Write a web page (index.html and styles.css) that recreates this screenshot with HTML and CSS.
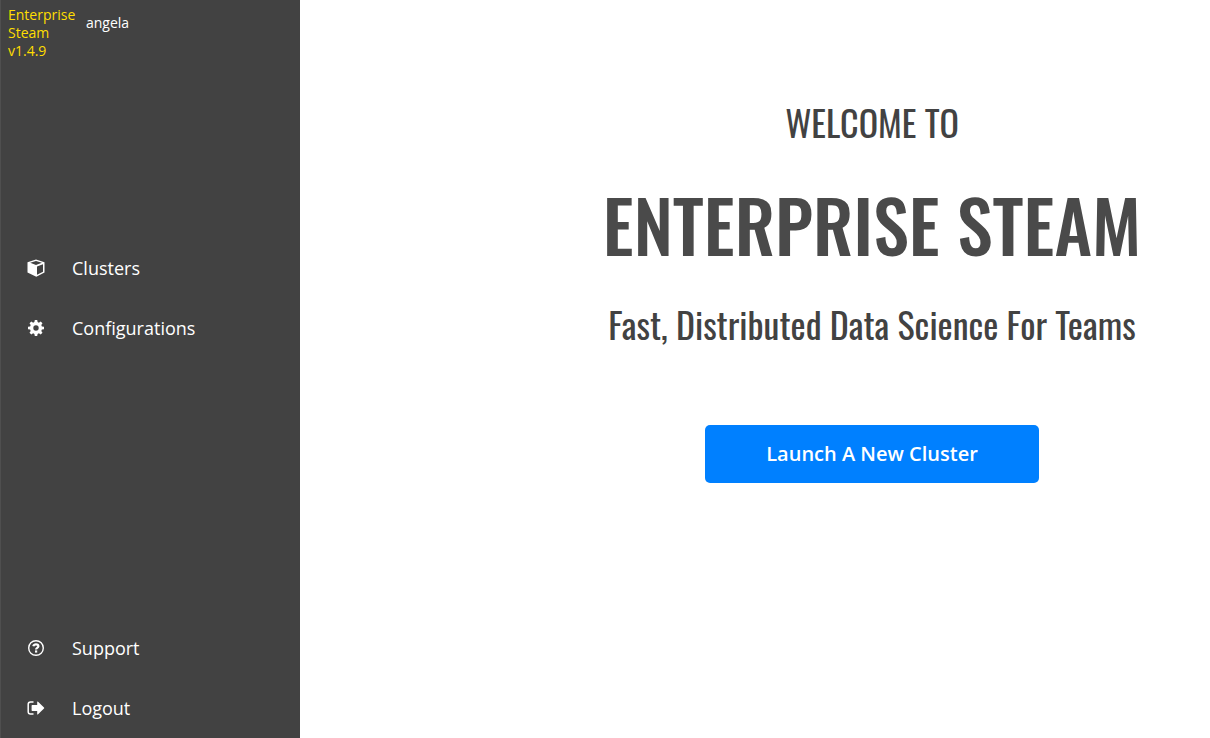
FILE: index.html
```html
<!DOCTYPE html>
<html lang="en">
<head>
<meta charset="utf-8">
<meta name="viewport" content="width=device-width, initial-scale=1">
<title>Enterprise Steam</title>
<link rel="stylesheet" href="styles.css">
</head>
<body>
<div class="app">
  <aside class="sidebar">
    <header class="brand">
      <div class="product">Enterprise Steam v1.4.9</div>
      <div class="user">angela</div>
    </header>
    <nav class="menu">
      <a class="item" href="#clusters">
        <svg class="icon" viewBox="0 0 18 18" aria-hidden="true"><path fill="#fff" fill-rule="evenodd" d="M9 .5 17.5 3.2V13.6L9.3 17.7 .5 13.6V3.2ZM9 1.9 3.2 3.8 9 5.9 14.9 3.8ZM10 7.4V15.8L16 12.8V5.2Z"/></svg>
        <span>Clusters</span>
      </a>
      <a class="item" href="#configurations">
        <svg class="icon" viewBox="0 0 18 18" aria-hidden="true"><path fill="#fff" fill-rule="evenodd" d="M7.8 1h2.4l.4 2.1 1.3.6 1.8-1.2 1.8 1.8-1.2 1.8.6 1.3 2.1.4v2.4l-2.1.4-.6 1.3 1.2 1.8-1.8 1.8-1.8-1.2-1.3.6-.4 2.1H7.8l-.4-2.1-1.3-.6-1.8 1.2-1.8-1.8 1.2-1.8-.6-1.3L1 10.2V7.8l2.1-.4.6-1.3-1.2-1.8 1.8-1.8 1.8 1.2 1.3-.6ZM9 6.3A2.7 2.7 0 1 0 9 11.7 2.7 2.7 0 0 0 9 6.3Z"/></svg>
        <span>Configurations</span>
      </a>
    </nav>
    <nav class="menu menu-end">
      <a class="item" href="#support">
        <svg class="icon" viewBox="0 0 18 18" aria-hidden="true"><circle cx="9" cy="9" r="7.3" fill="none" stroke="#fff" stroke-width="1.4"/><path fill="none" stroke="#fff" stroke-width="2.2" d="M6.3 7.3C6.7 5.9 7.7 5.3 9 5.3c1.5 0 2.4.8 2.4 1.9 0 1.7-2.3 1.6-2.3 3.2"/><path fill="#fff" d="M8 11.4h2.2v2.2H8z"/></svg>
        <span>Support</span>
      </a>
      <a class="item" href="#logout">
        <svg class="icon" viewBox="0 0 18 18" aria-hidden="true"><path fill="none" stroke="#fff" stroke-width="1.5" d="M6.5 3H3.5Q1.2 3 1.2 5.3v7.4Q1.2 15 3.5 15h3"/><path fill="#fff" d="M5.2 6.1h5V3q0-1 .9-.3l5.9 5.7q.5.6 0 1.2l-5.9 5.7q-.9.7-.9-.3v-3.100h-5q-.6 0-.6-.6V6.7q0-.6.6-.6Z"/></svg>
        <span>Logout</span>
      </a>
    </nav>
  </aside>
  <main class="main">
    <section class="hero">
      <p class="lead">WELCOME TO</p>
      <h1 class="title">ENTERPRISE STEAM</h1>
      <p class="tagline">Fast, Distributed Data Science For Teams</p>
      <button class="launch" type="button">Launch A New Cluster</button>
    </section>
  </main>
</div>
</body>
</html>
```
FILE: styles.css
```css
* { box-sizing: border-box; }
body {
  margin: 0;
  background: #fff;
  color: #424242;
  font-family: "Open Sans", "Liberation Sans", sans-serif;
}
.app { display: flex; min-height: 100vh; }
.sidebar {
  display: flex;
  flex-direction: column;
  flex: 0 0 300px;
  background: #424242;
  border-left: 1px solid #4f4f4f;
  color: #fff;
}
.brand {
  display: flex;
  gap: 10px;
  height: 238px;
  padding: 6px 7px;
  font-size: 14px;
  line-height: 18px;
}
.product { width: 68px; color: #ffde00; }
.user { padding-top: 8px; }
.menu { display: flex; flex-direction: column; }
.menu-end { margin-top: auto; }
.item {
  display: flex;
  align-items: center;
  gap: 27px;
  height: 60px;
  padding: 0 26px;
  color: #fff;
  font-size: 18px;
  line-height: 24px;
  text-decoration: none;
}
.icon { width: 18px; height: 18px; }
.main { flex: 1; padding: 90px 0 40px 234px; }
.hero {
  display: flex;
  flex-direction: column;
  align-items: center;
  font-family: Oswald, "Liberation Sans Narrow", "Liberation Sans", sans-serif;
  white-space: nowrap;
}
.lead, .title, .tagline { margin: 0; }
.lead { font-size: 36px; line-height: 64px; font-weight: 400; }
.title { margin-top: 14px; font-size: 72px; line-height: 112px; color: #4a4a4a; font-weight: 500; }
.tagline { margin-top: 12px; font-size: 36px; line-height: 64px; font-weight: 400; }
.launch {
  width: 334px;
  height: 58px;
  margin-top: 69px;
  border: 0;
  border-radius: 5px;
  background: #0080ff;
  color: #fff;
  font: 600 20px/28px "Open Sans", "Liberation Sans", sans-serif;
}
```
